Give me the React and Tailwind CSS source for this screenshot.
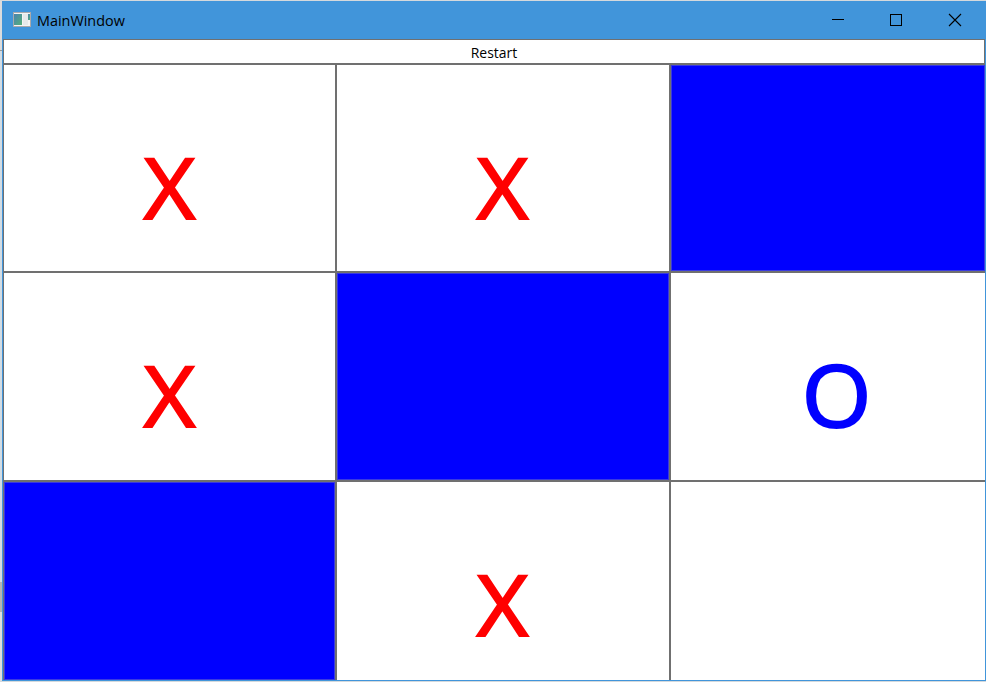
const COLUMNS = "grid-cols-[331px_332px_314px]";

function Cell({ mark, filled }) {
  return (
    <button
      className={
        "flex items-start justify-center overflow-hidden " +
        (filled ? "border border-[#3a3ae0] bg-[#0000ff]" : "bg-white")
      }
    >
      {mark === "X" && (
        <span className="mt-[62px] block scale-x-[1.05] text-[85px] leading-[119px] text-[#ff0000] [-webkit-text-stroke:2px_#ff0000]">X</span>
      )}
      {mark === "O" && (
        <span className="mt-[61px] ml-[17px] block scale-x-[1.04] text-[86px] leading-[120px] text-[#0000ff] [-webkit-text-stroke:2px_#0000ff]">O</span>
      )}
    </button>
  );
}

function TitleBar() {
  return (
    <header className="flex h-[38px] shrink-0 items-center bg-[#4195da]">
      <svg className="ml-[11px] shrink-0" width="18" height="16" viewBox="0 0 18 16" shapeRendering="crispEdges">
        <defs>
          <linearGradient id="pane" x1="0" y1="0" x2="1" y2="1">
            <stop offset="0" stopColor="#4b83b0" />
            <stop offset="1" stopColor="#55b079" />
          </linearGradient>
        </defs>
        <rect x="0" y="0" width="18" height="15" fill="#aaa9ab" />
        <rect x="1" y="1" width="16" height="13" fill="#f4f4f4" />
        <rect x="1" y="2" width="8" height="11" fill="url(#pane)" />
        <rect x="10" y="2" width="5" height="11" fill="#e6e9ea" />
        <rect x="15" y="2" width="2" height="6" fill="url(#pane)" />
      </svg>
      <span className="ml-[6px] grow origin-left scale-x-[0.96] text-[15px] leading-5 text-black">MainWindow</span>
      <svg className="shrink-0" width="154" height="38" viewBox="832 1 154 38" fill="none" stroke="black">
        <path d="M832 19.5h12" shapeRendering="crispEdges" />
        <rect x="890.5" y="14.5" width="11" height="11" shapeRendering="crispEdges" />
        <path d="M949 14l12 12M961 14l-12 12" strokeWidth="1.1" />
      </svg>
    </header>
  );
}

export default function App() {
  return (
    <div className="flex h-[682px] w-[986px] flex-col overflow-hidden bg-[#d5d9dc] pt-px font-['Open_Sans','Noto_Sans',sans-serif]">
      <div className="flex h-[680px]">
        <div className="flex w-[2px] shrink-0 flex-col">
          <div className="h-[49px] bg-[#dcdcdc]" />
          <div className="h-px bg-[#999999]" />
          <div className="h-[531px] bg-[#d2dce4]" />
          <div className="h-[30px] bg-[#b4b4b4]" />
          <div className="grow bg-[#dedede]" />
        </div>
        <main className="flex w-[984px] flex-col">
          <TitleBar />
          <div className="flex h-[642px] flex-col border-x border-b border-[#4195da]">
            <button className="h-[26px] w-[982px] shrink-0 border border-b-2 border-[#707070] bg-white pt-px text-[15px] leading-[22px] text-black">
              <span className="inline-block scale-x-[0.93]">Restart</span>
            </button>
            <div className={"grid grow grid-rows-[206px_207px_198px] gap-[2px] bg-[#707070] pl-px " + COLUMNS}>
              <Cell mark="X" />
              <Cell mark="X" />
              <Cell filled />
              <Cell mark="X" />
              <Cell filled />
              <Cell mark="O" />
              <Cell filled />
              <Cell mark="X" />
              <Cell />
            </div>
          </div>
        </main>
      </div>
    </div>
  );
}
